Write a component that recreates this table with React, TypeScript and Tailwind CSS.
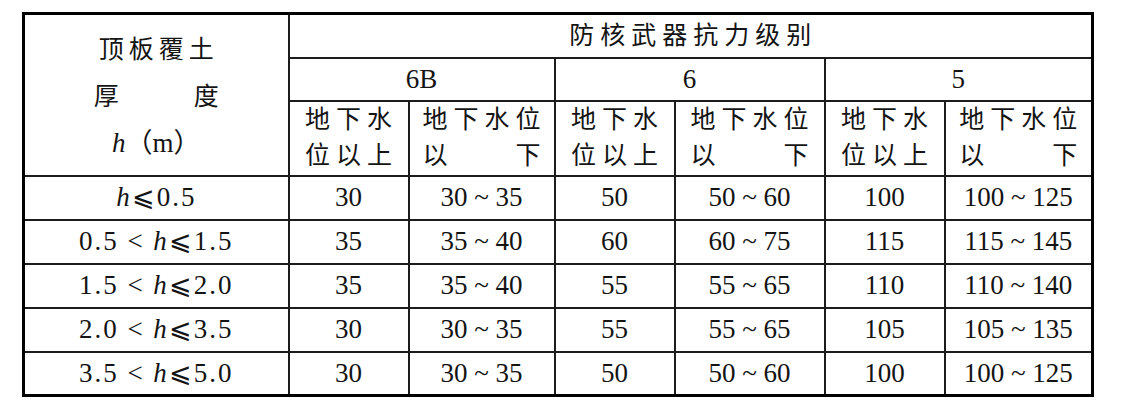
import React from "react";

const font = "font-['Liberation_Serif','Noto_Sans_CJK_SC',serif]";

const rows = [
  { lo: "", hi: "0.5", v: ["30", "30 ~ 35", "50", "50 ~ 60", "100", "100 ~ 125"] },
  { lo: "0.5", hi: "1.5", v: ["35", "35 ~ 40", "60", "60 ~ 75", "115", "115 ~ 145"] },
  { lo: "1.5", hi: "2.0", v: ["35", "35 ~ 40", "55", "55 ~ 65", "110", "110 ~ 140"] },
  { lo: "2.0", hi: "3.5", v: ["30", "30 ~ 35", "55", "55 ~ 65", "105", "105 ~ 135"] },
  { lo: "3.5", hi: "5.0", v: ["30", "30 ~ 35", "50", "50 ~ 60", "100", "100 ~ 125"] },
];

const cell = "border-2 border-[#1c1c1c] text-center align-middle p-0";

function Above() {
  return (
    <div className="inline-flex flex-col items-start text-[25px] leading-[36px] tracking-[6px] pl-[6px]">
      <span>地下水</span>
      <span>位以上</span>
    </div>
  );
}

function Below() {
  return (
    <div className="inline-flex flex-col text-[25px] leading-[36px] tracking-[6px] pl-[6px]">
      <span>地下水位</span>
      <span className="flex justify-between">
        <span>以</span>
        <span>下</span>
      </span>
    </div>
  );
}

export default function App() {
  return (
    <div className={`w-[1123px] h-[415px] bg-white pt-[12px] pl-[22px] text-[#141414] ${font}`}>
      <table className="table-fixed border-collapse border-[3px] border-black w-[1069px]">
        <colgroup>
          <col className="w-[265px]" />
          <col className="w-[120px]" />
          <col className="w-[146px]" />
          <col className="w-[120px]" />
          <col className="w-[150px]" />
          <col className="w-[120px]" />
          <col className="w-[148px]" />
        </colgroup>
        <thead>
          <tr className="h-[44px]">
            <th rowSpan={3} className={`${cell} font-normal`}>
              <div className="inline-flex flex-col text-[25px] leading-[47px] pt-[4px]">
                <span className="tracking-[5px] pl-[5px]">顶板覆土</span>
                <span className="flex justify-between">
                  <span>厚</span>
                  <span>度</span>
                </span>
                <span className="text-[27px]">
                  <i>h</i>（m）
                </span>
              </div>
            </th>
            <th colSpan={6} className={`${cell} font-normal text-[25px] tracking-[6px] pl-[6px]`}>
              防核武器抗力级别
            </th>
          </tr>
          <tr className="h-[43px]">
            <th colSpan={2} className={`${cell} font-medium text-[27px]`}>6B</th>
            <th colSpan={2} className={`${cell} font-medium text-[27px]`}>6</th>
            <th colSpan={2} className={`${cell} font-medium text-[27px]`}>5</th>
          </tr>
          <tr className="h-[75px]">
            {[0, 1, 2].map((i) => (
              <React.Fragment key={i}>
                <th className={`${cell} font-normal`}>
                  <Above />
                </th>
                <th className={`${cell} font-normal`}>
                  <Below />
                </th>
              </React.Fragment>
            ))}
          </tr>
        </thead>
        <tbody>
          {rows.map((r, i) => (
            <tr key={i} className="h-[44px]">
              <td className={`${cell} text-[27px] tracking-[2px]`}>
                {r.lo && <span>{r.lo} &lt; </span>}
                <i>h</i>
                <span>⩽{r.hi}</span>
              </td>
              {r.v.map((v, j) => (
                <td key={j} className={`${cell} text-[27px]`}>
                  {v}
                </td>
              ))}
            </tr>
          ))}
        </tbody>
      </table>
    </div>
  );
}
